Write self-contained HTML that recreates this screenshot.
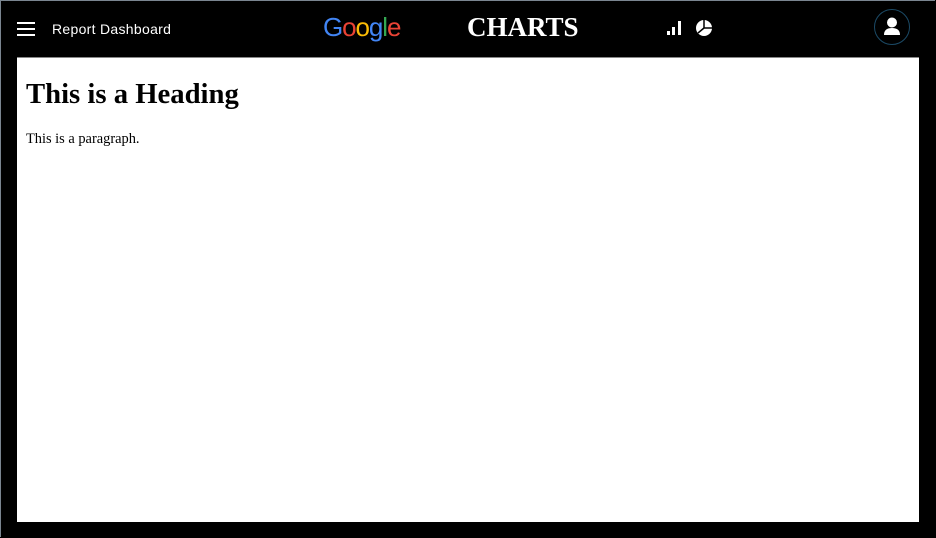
<!DOCTYPE html>
<html><head><style>
html,body{margin:0;padding:0;width:936px;height:538px;overflow:hidden;background:#000;}
.frame{position:absolute;left:0;top:0;width:934px;height:536px;border:1px solid #7a8590;border-right:none;border-bottom:none;background:#000;}
.ham{position:absolute;left:17px;top:22px;width:18px;}
.ham div{height:2px;background:#fff;margin-bottom:4px;}
.title{position:absolute;left:52px;top:21px;color:#fff;font:14px "Liberation Sans",sans-serif;letter-spacing:0.3px;}
.google{position:absolute;left:323px;top:12px;font:26px "Liberation Sans",sans-serif;letter-spacing:-1.1px;}
.charts{position:absolute;left:467px;top:12px;color:#fff;font:900 27px "Liberation Serif",serif;letter-spacing:0px;}
.user{position:absolute;left:874px;top:9px;width:34px;height:34px;border:1px solid #1b4a66;border-radius:50%;}
.content{position:absolute;left:17px;top:57px;width:902px;height:464px;background:#fff;border-top:1px solid #888;}
h1{position:absolute;left:9px;top:20px;margin:0;font:bold 28.7px "Liberation Serif",serif;}
p{position:absolute;left:9px;top:73px;margin:0;font:14.4px "Liberation Serif",serif;}
</style></head><body>
<div class="frame"></div>
<div class="ham"><div></div><div></div><div></div></div>
<div class="title">Report Dashboard</div>
<div class="google"><span style="color:#4285f4">G</span><span style="color:#ea4335">o</span><span style="color:#fbbc05">o</span><span style="color:#4285f4">g</span><span style="color:#34a853">l</span><span style="color:#ea4335">e</span></div>
<div class="charts">CHARTS</div>
<svg style="position:absolute;left:666px;top:18px" width="50" height="20" viewBox="0 0 50 20">
<rect x="1" y="13" width="3" height="4" fill="#fff"/><rect x="6" y="9" width="3" height="8" fill="#fff"/><rect x="12" y="3" width="3" height="14" fill="#fff"/>
<circle cx="38" cy="10" r="8" fill="#fff"/><path d="M38 10 L38 2 M38 10 L46 10 M38 10 L32 15" stroke="#000" stroke-width="1.5"/>
</svg>
<div class="user"><svg width="34" height="34" viewBox="0 0 34 34"><circle cx="17" cy="12.5" r="5" fill="#fff"/><path d="M9 25 Q9 18 17 18 Q25 18 25 25 Z" fill="#fff"/></svg></div>
<div class="content"><h1>This is a Heading</h1><p>This is a paragraph.</p></div>
</body></html>
